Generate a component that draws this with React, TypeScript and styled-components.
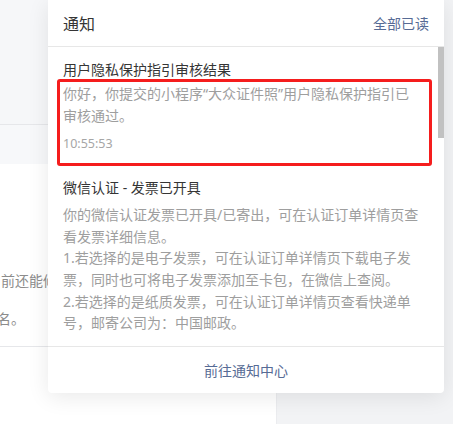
import React from 'react';
import styled, { createGlobalStyle } from 'styled-components';

const GlobalStyle = createGlobalStyle`
  html, body {
    margin: 0;
    padding: 0;
  }
  body {
    font-family: "Noto Sans", "Noto Sans CJK SC", sans-serif;
    background: #f2f3f5;
  }
`;

interface Notice {
  title: string;
  desc: string[];
  time?: string;
  marked?: boolean;
}

const notices: Notice[] = [
  {
    title: '用户隐私保护指引审核结果',
    desc: ['你好，你提交的小程序“大众证件照”用户隐私保护指引已审核通过。'],
    time: '10:55:53',
    marked: true,
  },
  {
    title: '微信认证 - 发票已开具',
    desc: [
      '你的微信认证发票已开具/已寄出，可在认证订单详情页查看发票详细信息。',
      '1.若选择的是电子发票，可在认证订单详情页下载电子发票，同时也可将电子发票添加至卡包，在微信上查阅。',
      '2.若选择的是纸质发票，可在认证订单详情页查看快递单号，邮寄公司为：中国邮政。',
    ],
  },
  {
    title: '微信认证 - 审核通过',
    desc: ['你的微信认证已审核通过，认证有效期为一年，请在到期前及时进行年审。'],
    time: '昨天 16:20:11',
  },
];

const THUMB_HEIGHT = 91;

function App() {
  return (
    <>
      <GlobalStyle />
      <Page>
        <MainPanel>
          <TopBlock />
          <TableHead />
          <TableBody>
            <Row>
              <FadedLine $shift={-13}>目前还能修改名称和简介</FadedLine>
              <FadedLine $shift={-3}>名。</FadedLine>
            </Row>
          </TableBody>
        </MainPanel>

        <Popover>
          <Header>
            <HeaderTitle>通知</HeaderTitle>
            <LinkText>全部已读</LinkText>
          </Header>
          <List>
            <ScrollArea>
              {notices.map((n) => (
                <Item key={n.title}>
                  <ItemTitle>{n.title}</ItemTitle>
                  {n.marked ? (
                    <Highlight>
                      {n.desc.map((d) => (
                        <Desc key={d}>{d}</Desc>
                      ))}
                      {n.time && <Time>{n.time}</Time>}
                    </Highlight>
                  ) : (
                    <Body>
                      {n.desc.map((d) => (
                        <Desc key={d}>{d}</Desc>
                      ))}
                      {n.time && <Time>{n.time}</Time>}
                    </Body>
                  )}
                </Item>
              ))}
            </ScrollArea>
            <ScrollTrack>
              <ScrollThumb style={{ height: THUMB_HEIGHT }} />
            </ScrollTrack>
          </List>
          <Footer>
            <LinkText>前往通知中心</LinkText>
          </Footer>
        </Popover>
      </Page>
    </>
  );
}

export default App;

const Page = styled.div`
  position: relative;
  width: 453px;
  height: 424px;
  overflow: hidden;
  background: #f2f3f5;
`;

const MainPanel = styled.div`
  width: 276px;
  height: 100%;
  display: flex;
  flex-direction: column;
  background: #fff;
  border-right: 1px solid #ebecef;
`;

const TopBlock = styled.div`
  height: 124px;
  background: #f6f7f9;
  border-bottom: 1px solid #e6e7ea;
`;

const TableHead = styled.div`
  height: 39px;
  background: #f7f8fa;
`;

const TableBody = styled.div`
  flex: 1;
`;

const Row = styled.div`
  height: 183px;
  padding-top: 106px;
  box-sizing: border-box;
  border-bottom: 1px solid #e6e7ea;
  display: flex;
  flex-direction: column;
  gap: 16px;
  overflow: hidden;
`;

const FadedLine = styled.div<{ $shift: number }>`
  margin-left: ${(p) => p.$shift}px;
  font-size: 14px;
  line-height: 22px;
  color: #8c8c8c;
  white-space: nowrap;
`;

const Popover = styled.div`
  position: absolute;
  left: 48px;
  top: 0;
  width: 396px;
  display: flex;
  flex-direction: column;
  background: #fff;
  border-radius: 0 0 4px 4px;
  box-shadow: 0 4px 22px rgba(0, 0, 0, 0.09);
`;

const Header = styled.div`
  height: 46px;
  padding: 0 15px;
  display: flex;
  align-items: center;
  justify-content: space-between;
  border-bottom: 1px solid #e7e7e7;
`;

const HeaderTitle = styled.div`
  font-size: 16px;
  color: #353535;
`;

const LinkText = styled.span`
  font-size: 14px;
  color: #576b95;
  cursor: pointer;
`;

const List = styled.div`
  height: 299px;
  display: flex;
`;

const ScrollArea = styled.div`
  flex: 1;
  min-width: 0;
  padding-top: 1px;
  overflow: hidden;
`;

const ScrollTrack = styled.div`
  width: 6px;
  flex-shrink: 0;
  background: #fff;
`;

const ScrollThumb = styled.div`
  background: #c1c1c1;
`;

const Item = styled.div`
  padding: 12px 15px 10px;
  &:first-child {
    padding-bottom: 0;
  }
`;

const ItemTitle = styled.div`
  font-size: 14px;
  line-height: 20px;
  color: #353535;
`;

const Body = styled.div`
  margin-top: 6px;
`;

const Highlight = styled.div`
  margin: -1px -9px 0 -6px;
  padding: 1px 6px 9px 3px;
  border: 3px solid #f51d1d;
  border-radius: 3px;
`;

const Desc = styled.div`
  font-size: 14px;
  line-height: 21.6px;
  color: #9e9e9e;
`;

const Time = styled.div`
  margin-top: 8px;
  font-size: 12.5px;
  line-height: 20px;
  color: #a6a6a6;
`;

const Footer = styled.div`
  height: 46px;
  display: flex;
  align-items: center;
  justify-content: center;
  border-top: 1px solid #e7e7e7;
`;
